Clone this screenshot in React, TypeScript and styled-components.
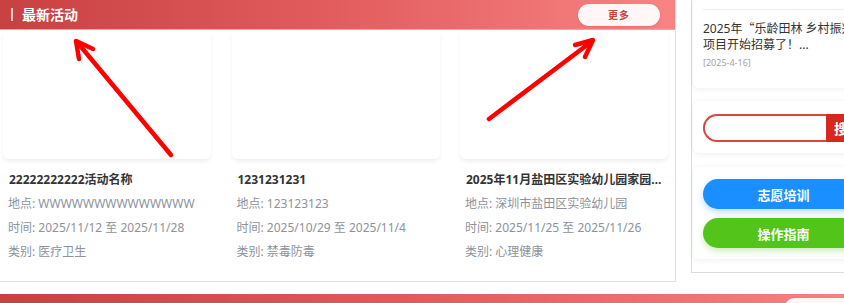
import React from "react";
import styled, { createGlobalStyle } from "styled-components";

const GlobalStyle = createGlobalStyle`
  html, body {
    margin: 0;
    padding: 0;
    overflow: hidden;
    background: #ffffff;
  }
  body {
    font-family: "Noto Sans", "Noto Sans CJK SC", sans-serif;
    color: #333;
  }
  * { box-sizing: border-box; }
`;

const Page = styled.div`
  position: relative;
  width: 940px;
  height: 303px;
  overflow: hidden;
  display: flex;
  flex-direction: column;
  gap: 12px;
`;

const TopRow = styled.div`
  display: flex;
  align-items: flex-start;
  gap: 15px;
  flex-shrink: 0;
`;

const Panel = styled.section`
  width: 676px;
  height: 282px;
  flex-shrink: 0;
  border-right: 1px solid #e2e2e2;
  border-bottom: 1px solid #e2e2e2;
  display: flex;
  flex-direction: column;
`;

const SectionBar = styled.header`
  height: 30px;
  flex-shrink: 0;
  display: flex;
  align-items: center;
  justify-content: space-between;
  padding: 0 15px 0 11px;
  background: linear-gradient(90deg, #c94041 0%, #e25d5e 50%, #f98383 100%);
  border-bottom: 1px solid #f3a3a3;
`;

const BarTitle = styled.h2`
  margin: 0;
  display: flex;
  align-items: center;
  gap: 9px;
  font-size: 14px;
  font-weight: 700;
  color: #fff;
  line-height: 1;
  &::before {
    content: "";
    width: 2px;
    height: 13px;
    background: rgba(255, 255, 255, 0.75);
  }
`;

const MoreButton = styled.button`
  width: 82px;
  height: 22px;
  border: none;
  border-radius: 11px;
  background: #fff6f6;
  color: #c8403f;
  font-family: inherit;
  font-size: 10px;
  font-weight: 600;
  letter-spacing: 1px;
  cursor: pointer;
  box-shadow: 0 1px 2px rgba(150, 30, 30, 0.15);
`;

const CardGrid = styled.div`
  display: flex;
  gap: 20.5px;
  padding: 0 0 0 3px;
`;

const ActivityCard = styled.article`
  width: 208px;
  flex-shrink: 0;
  display: flex;
  flex-direction: column;
`;

const Cover = styled.div`
  height: 129px;
  background: #fff;
  border-radius: 0 0 6px 6px;
  box-shadow: 0 3px 5px -1px rgba(0, 0, 0, 0.08);
`;

const CardInfo = styled.div`
  padding: 9px 6px 0 5px;
  display: flex;
  flex-direction: column;
`;

const CardTitle = styled.h3`
  margin: 0 0 0 1px;
  font-size: 12px;
  font-weight: 700;
  color: #333;
  line-height: 24px;
  white-space: nowrap;
  overflow: hidden;
  text-overflow: ellipsis;
`;

const MetaLine = styled.p`
  margin: 0;
  font-size: 12px;
  color: #8d929b;
  line-height: 24px;
  white-space: nowrap;
  overflow: hidden;
`;

const SideColumn = styled.aside`
  width: 236px;
  height: 273px;
  flex-shrink: 0;
  border-left: 1px solid #dcdcdc;
  border-bottom: 1px solid #dcdcdc;
  padding: 0 0 0 1px;
  display: flex;
  flex-direction: column;
`;

const SideCard = styled.div<{ $pt: number; $pb: number; $mt: number }>`
  margin-top: ${(p) => p.$mt}px;
  background: #fff;
  border-radius: 6px;
  box-shadow: 0 1px 6px rgba(0, 0, 0, 0.07);
  padding: ${(p) => p.$pt}px 10px ${(p) => p.$pb}px 10px;
  display: flex;
  flex-direction: column;
  gap: 9px;
`;

const NewsItem = styled.div`
  margin-top: 9px;
  border-top: 1px solid #eeeeee;
  padding-top: 10px;
  display: flex;
  flex-direction: column;
`;

const NewsText = styled.p`
  margin: 0;
  font-size: 12px;
  line-height: 16px;
  color: #333;
  width: 214px;
`;

const CjkQuote = styled.span`
  font-family: "Noto Sans CJK SC", sans-serif;
`;

const NewsDate = styled.span`
  margin-top: 3px;
  font-size: 9px;
  line-height: 14px;
  color: #a3a3a3;
`;

const SearchForm = styled.form`
  display: flex;
  height: 28px;
`;

const SearchInput = styled.input`
  width: 123px;
  height: 28px;
  border: 2px solid #d9463b;
  border-right: none;
  border-radius: 14px 0 0 14px;
  outline: none;
  padding: 0 12px;
  font-family: inherit;
`;

const SearchButton = styled.button`
  width: 44px;
  height: 28px;
  border: none;
  background: #d8271d;
  color: #fff;
  font-family: inherit;
  font-size: 14px;
  font-weight: 600;
  padding: 0;
`;

const PillButton = styled.button<{ $bg: string; $shadow: string }>`
  width: 161px;
  height: 30px;
  border: none;
  border-radius: 15px;
  background: ${(p) => p.$bg};
  color: #fff;
  font-family: inherit;
  font-size: 13px;
  font-weight: 700;
  box-shadow: 0 3px 6px ${(p) => p.$shadow};
  cursor: pointer;
`;

const BottomSection = styled.section`
  width: 881px;
  flex-shrink: 0;
`;

const Overlay = styled.svg`
  position: absolute;
  left: 0;
  top: 0;
  pointer-events: none;
`;

const activities = [
  {
    title: "22222222222活动名称",
    place: "WWWWWWWWWWWWWW",
    time: "2025/11/12 至 2025/11/28",
    type: "医疗卫生",
  },
  {
    title: "1231231231",
    place: "123123123",
    time: "2025/10/29 至 2025/11/4",
    type: "禁毒防毒",
  },
  {
    title: "2025年11月盐田区实验幼儿园家园共育活动",
    place: "深圳市盐田区实验幼儿园",
    time: "2025/11/25 至 2025/11/26",
    type: "心理健康",
  },
];

export default function App() {
  return (
    <>
      <GlobalStyle />
      <Page>
        <TopRow>
          <Panel>
            <SectionBar>
              <BarTitle>最新活动</BarTitle>
              <MoreButton>更多</MoreButton>
            </SectionBar>
            <CardGrid>
              {activities.map((a) => (
                <ActivityCard key={a.title}>
                  <Cover />
                  <CardInfo>
                    <CardTitle>{a.title}</CardTitle>
                    <MetaLine>地点: {a.place}</MetaLine>
                    <MetaLine>时间: {a.time}</MetaLine>
                    <MetaLine>类别: {a.type}</MetaLine>
                  </CardInfo>
                </ActivityCard>
              ))}
            </CardGrid>
          </Panel>
          <SideColumn>
            <SideCard $mt={0} $pt={0} $pb={18}>
              <NewsItem>
                <NewsText>
                  2025年<CjkQuote>“</CjkQuote>乐龄田林 乡村振兴<CjkQuote>”</CjkQuote>志愿服务项目开始招募了！...
                </NewsText>
                <NewsDate>[2025-4-16]</NewsDate>
              </NewsItem>
            </SideCard>
            <SideCard $mt={13} $pt={13} $pb={11}>
              <SearchForm onSubmit={(e) => e.preventDefault()}>
                <SearchInput />
                <SearchButton>搜索</SearchButton>
              </SearchForm>
            </SideCard>
            <SideCard $mt={14} $pt={12} $pb={11}>
              <PillButton $bg="#1a8fff" $shadow="rgba(26,143,255,0.3)">志愿培训</PillButton>
              <PillButton $bg="#52c41a" $shadow="rgba(82,196,26,0.3)">操作指南</PillButton>
            </SideCard>
          </SideColumn>
        </TopRow>
        <BottomSection>
          <SectionBar>
            <span />
            <MoreButton>更多</MoreButton>
          </SectionBar>
        </BottomSection>
        <Overlay width="844" height="303" viewBox="0 0 844 303">
          <g stroke="#ff0000" strokeWidth="4.5" strokeLinecap="round" strokeLinejoin="round" fill="none">
            <path d="M171 155 L77 42" />
            <path d="M93 49 L76 41 L79 59" />
            <path d="M489 119 L591 42" />
            <path d="M575 45 L593 40 L585 57" />
          </g>
        </Overlay>
      </Page>
    </>
  );
}
